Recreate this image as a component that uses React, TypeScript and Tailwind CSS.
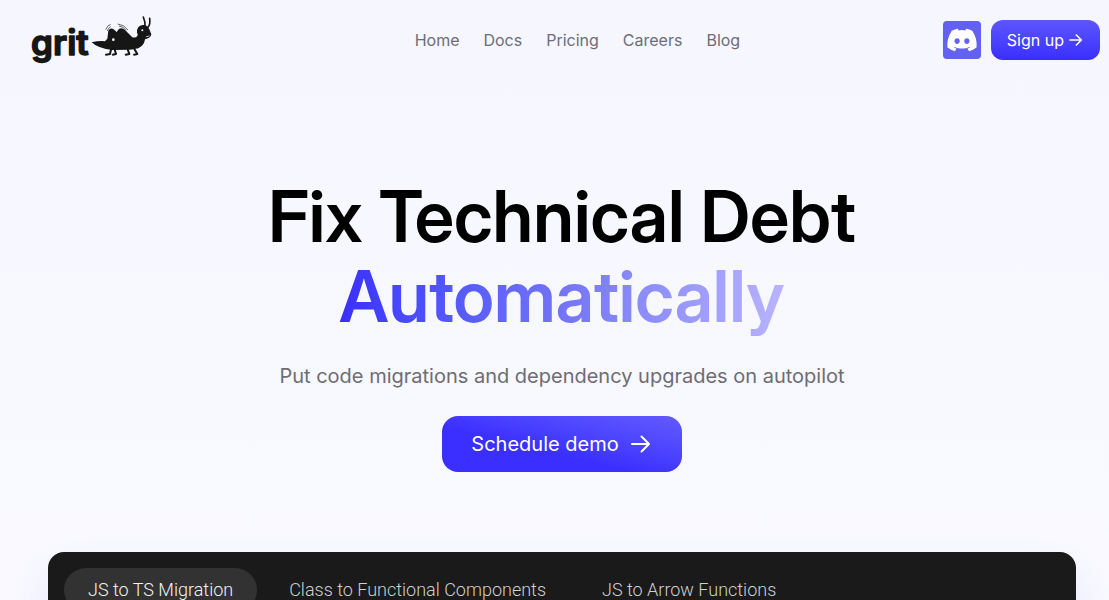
import { FaDiscord } from "react-icons/fa";

const links = ["Home", "Docs", "Pricing", "Careers", "Blog"];
const tabs = ["JS to TS Migration", "Class to Functional Components", "JS to Arrow Functions"];

function Arrow({ size, stroke }: { size: number; stroke: number }) {
  return (
    <svg
      width={size}
      height={size}
      viewBox="0 0 24 24"
      fill="none"
      stroke="currentColor"
      strokeWidth={stroke}
      strokeLinecap="round"
      strokeLinejoin="round"
      aria-hidden="true"
    >
      <path d="M3 12h17M12.500 4.500 20 12l-7.500 7.500" />
    </svg>
  );
}

function Logo() {
  return (
    <svg width="120" height="50" viewBox="0 0 120 50" role="img" aria-label="grit" className="overflow-visible text-[#161617]">
      <text
        x="-1"
        y="40"
        className="fill-current stroke-current font-['Inter',sans-serif] text-[35px] font-semibold"
        strokeWidth="1.5"
        strokeLinejoin="round"
      >
        grit
      </text>
      <g transform="translate(58 -5) scale(.3333)">
        <path
          fill="currentColor"
          d="M5 97Q30 91 45 94L52 86 55 62Q61 52 70 57L80 66 86 58Q94 50 105 60L127 82Q138 84 142 78Q145 74 141 68Q140 47 158 45Q172 44 178 58L184 73Q183 83 170 86L165 88Q163 104 150 112Q140 118 120 119L68 120Q24 116 5 97Z"
        />
        <path
          fill="none"
          stroke="currentColor"
          strokeWidth="6"
          strokeLinejoin="round"
          strokeLinecap="round"
          d="M64 115L60 132 48 134M73 115L78 132 68 134M112 115L118 132 107 134M130 112L142 132 132 134"
        />
        <path
          fill="none"
          stroke="currentColor"
          strokeWidth="5"
          strokeLinecap="round"
          d="M165 49Q166 35 160 21M173 53Q182 44 179 25"
        />
        <path
          fill="none"
          stroke="currentColor"
          strokeWidth="2"
          d="M47 59Q52 46 62 43M52 63Q55 54 62 50M83 42Q101 43 114 60M87 48Q99 49 109 62"
        />
        <circle cx="157" cy="61" r="3" fill="#f7f7ff" />
        <circle cx="70" cy="89" r="4" fill="#f7f7ff" />
        <path fill="none" stroke="#f7f7ff" strokeWidth="2" d="M168 80Q175 80 179 77" />
      </g>
    </svg>
  );
}

export default function App() {
  return (
    <div className="h-screen overflow-hidden bg-linear-to-b from-[#f6f6ff] to-[#f9f9ff] font-['Inter',sans-serif]">
      <header className="flex h-20 items-center justify-between pr-[9px] pl-8">
        <a href="#" className="w-45">
          <Logo />
        </a>
        <nav className="flex gap-6 text-base text-[#6d6d78]">
          {links.map((l) => (
            <a key={l} href="#">
              {l}
            </a>
          ))}
        </nav>
        <div className="flex items-center gap-2.5">
          <a
            href="#"
            aria-label="Discord"
            className="flex size-[38px] items-center justify-center rounded-sm bg-[#6261f3] text-white"
          >
            <FaDiscord size={32} />
          </a>
          <a
            href="#"
            className="flex h-10 items-center gap-1 rounded-xl bg-linear-to-b from-[#5e54ff] to-[#3a2dff] px-4 text-base text-white"
          >
            Sign up
            <Arrow size={16} stroke={2.4} />
          </a>
        </div>
      </header>

      <main className="pr-[33px] pl-12">
        <section className="flex flex-col items-center pt-24 text-center">
          <h1 className="font-['Inter_Display','Inter',sans-serif] text-[71px] leading-20 font-semibold text-black">
            Fix Technical Debt
            <br />
            <span className="inline-block bg-linear-to-r from-[#3b2dff] via-[#7474f6] to-[#b9b4ff] bg-clip-text text-transparent">
              Automatically
            </span>
          </h1>
          <p className="mt-6 text-xl leading-8 text-[#6d6d74]">
            Put code migrations and dependency upgrades on autopilot
          </p>
          <a
            href="#"
            className="mt-6 flex h-14 items-center gap-2.5 rounded-2xl bg-linear-to-tr from-[#3b2fff] from-40% to-[#6459ff] px-[29px] text-xl text-white"
          >
            Schedule demo
            <Arrow size={24} stroke={2} />
          </a>
        </section>

        <section className="mt-20 h-96 rounded-2xl bg-[#1a1a1a] p-4 shadow-[0_24px_40px_rgba(90,80,255,0.12)]">
          <div className="flex gap-2 font-['Roboto',sans-serif] text-lg font-light">
            {tabs.map((t, i) => (
              <button
                key={t}
                type="button"
                className={
                  i === 0
                    ? "h-11 rounded-full bg-[#323232] px-6 text-[#f2f2f2]"
                    : "h-11 rounded-full px-6 text-[#cfcfcf]"
                }
              >
                {t}
              </button>
            ))}
          </div>
        </section>
      </main>
    </div>
  );
}
